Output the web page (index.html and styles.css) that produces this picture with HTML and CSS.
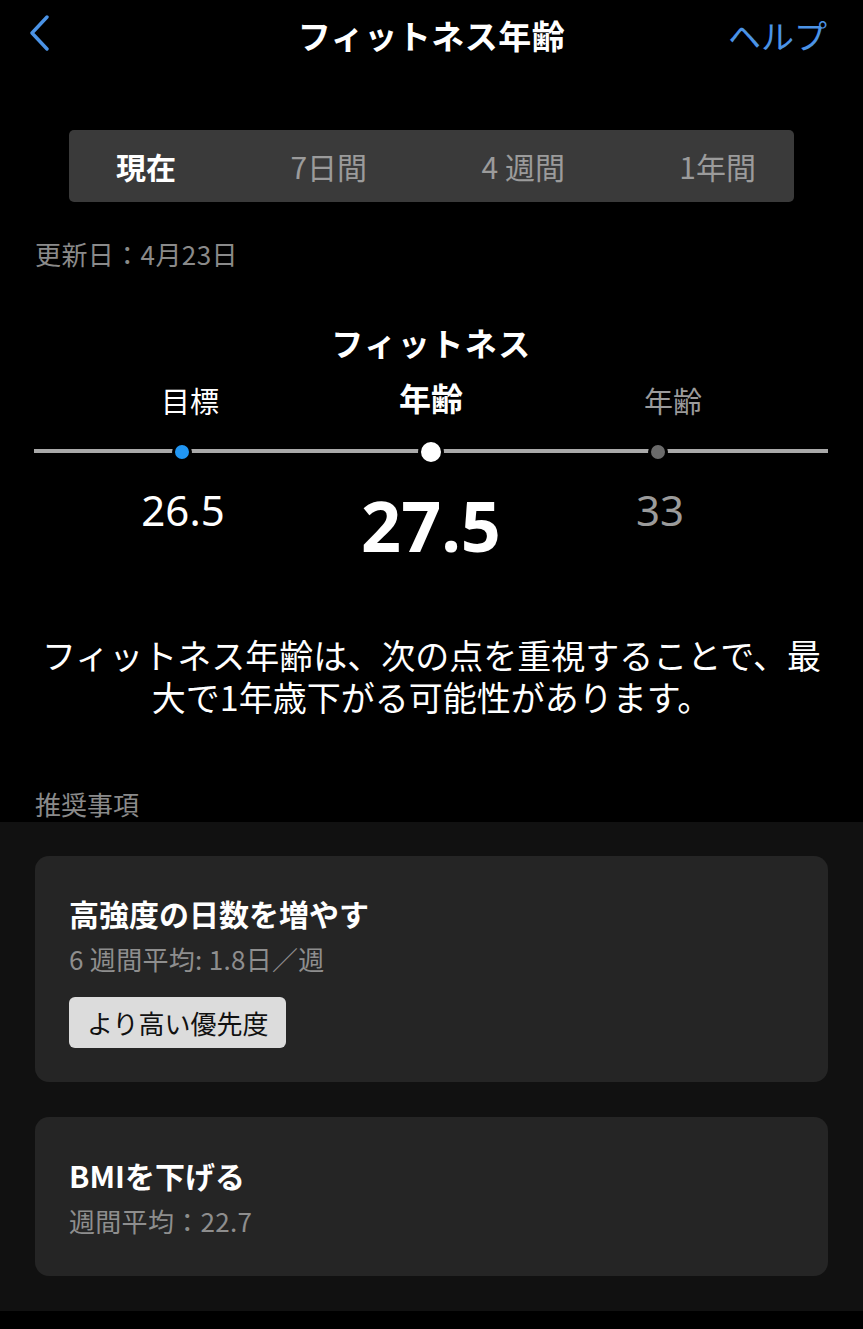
FILE: index.html
```html
<!DOCTYPE html>
<html lang="ja">
<head>
<meta charset="utf-8">
<title>フィットネス年齢</title>
<link rel="stylesheet" href="styles.css">
</head>
<body>
<div class="page">
  <header class="nav">
    <div class="nav-left">
      <svg class="back" width="24" height="36" viewBox="0 0 24 36"><polyline points="19,2 4,18 19,34" fill="none" stroke="#4b93e6" stroke-width="3.4" stroke-linecap="round" stroke-linejoin="round"/></svg>
    </div>
    <h1 class="nav-title">フィットネス年齢</h1>
    <div class="nav-right"><span class="help">ヘルプ</span></div>
  </header>

  <nav class="segments">
    <span class="seg seg-active">現在</span>
    <span class="seg">7日間</span>
    <span class="seg">4 週間</span>
    <span class="seg">1年間</span>
  </nav>

  <p class="updated">更新日：4月23日</p>

  <section class="gauge">
    <div class="gauge-title">フィットネス</div>
    <div class="cols labels">
      <span class="lbl">目標</span>
      <span class="lbl lbl-main">年齢</span>
      <span class="lbl lbl-dim">年齢</span>
    </div>
    <div class="cols track">
      <span class="dot-cell"><span class="dot dot-blue"></span></span>
      <span class="dot-cell"><span class="dot dot-white"></span></span>
      <span class="dot-cell dot-cell-r"><span class="dot dot-gray"></span></span>
    </div>
    <div class="cols values">
      <span class="val val-l">26.5</span>
      <span class="val val-main">27.5</span>
      <span class="val val-dim val-r">33</span>
    </div>
  </section>

  <p class="message">フィットネス年齢は、次の点を重視することで、最大で1年歳下がる可能性があります。</p>

  <h2 class="section-label">推奨事項</h2>

  <section class="recs">
    <div class="card">
      <div class="card-title">高強度の日数を増やす</div>
      <div class="card-sub">6 週間平均: 1.8日／週</div>
      <span class="badge">より高い優先度</span>
    </div>
    <div class="card card-2">
      <div class="card-title">BMIを下げる</div>
      <div class="card-sub">週間平均：22.7</div>
    </div>
  </section>
</div>
</body>
</html>
```

FILE: styles.css
```css
* { box-sizing: border-box; }
html, body {
  margin: 0;
  padding: 0;
  background: #000;
}
body {
  font-family: "Noto Sans CJK JP", "Noto Sans", sans-serif;
  color: #fff;
  width: 863px;
  min-height: 1329px;
}
.page { width: 863px; }

.nav {
  height: 70px;
  display: grid;
  grid-template-columns: 1fr auto 1fr;
  align-items: center;
  padding: 0 36px 0 28px;
}
.nav-left { display: flex; align-items: center; }
.back { display: block; margin-top: -4px; }
.nav-title {
  margin: 0;
  font-size: 33px;
  font-weight: 700;
  line-height: 40px;
  letter-spacing: 0.5px;
  margin-left: 8px;
}
.nav-right { display: flex; justify-content: flex-end; }
.help {
  color: #4b93e6;
  font-size: 33px;
  line-height: 40px;
}

.segments {
  margin: 60px 69px 0;
  height: 72px;
  background: #3a3a3a;
  border-radius: 5px;
  display: flex;
  align-items: center;
  justify-content: space-between;
  padding: 0 38px 0 47px;
}
.seg {
  font-size: 30px;
  line-height: 40px;
  color: #9b9b9b;
}
.seg-active {
  color: #fff;
  font-weight: 700;
}

.updated {
  margin: 34px 0 0 35px;
  font-size: 26px;
  line-height: 36px;
  color: #8a8a8a;
  letter-spacing: 0.4px;
}

.gauge { margin-top: 50px; }
.gauge-title {
  text-align: center;
  font-size: 32px;
  font-weight: 700;
  line-height: 40px;
  letter-spacing: 1.5px;
}
.cols {
  display: grid;
  grid-template-columns: 250px 240px 222px;
  padding-left: 61px;
}
.labels { margin-top: 18px; }
.lbl {
  text-align: center;
  font-size: 29px;
  line-height: 40px;
  color: #fff;
}
.lbl:first-child { margin-left: 8px; }
.lbl-main {
  font-size: 32px;
  font-weight: 700;
  margin-top: -3px;
}
.lbl-dim { color: #9b9b9b; margin-left: 22px; }

.track {
  margin-top: 19px;
  height: 24px;
  align-items: center;
  background-image: linear-gradient(#a9a9a9, #a9a9a9);
  background-size: 794px 4px;
  background-position: 34px center;
  background-repeat: no-repeat;
}
.dot-cell {
  display: flex;
  justify-content: center;
  margin-left: -8px;
}
.dot-cell:nth-child(2) { margin-left: 0; }
.dot-cell-r { margin-left: -8px; }
.dot {
  display: block;
  border-radius: 50%;
  border: 3px solid #000;
}
.dot-blue { width: 20px; height: 20px; background: #2196f3; }
.dot-white { width: 26px; height: 26px; background: #fff; }
.dot-gray { width: 20px; height: 20px; background: #6a6a6a; }

.values {
  margin-top: 22px;
  align-items: start;
}
.val {
  text-align: center;
  font-size: 42px;
  line-height: 50px;
  color: #fff;
  font-family: "Noto Sans", "Noto Sans CJK JP", sans-serif;
}
.val-l { margin-left: -6px; }
.val-r { margin-left: -4px; }
.val-main {
  font-size: 70px;
  font-weight: 700;
  line-height: 80px;
}
.val-dim { color: #9b9b9b; }

.message {
  margin: 69px 30px 0;
  text-align: center;
  font-size: 34px;
  line-height: 42px;
  color: #fff;
}

.section-label {
  margin: 68px 0 0 35px;
  font-size: 26px;
  font-weight: 400;
  line-height: 36px;
  color: #8a8a8a;
}

.recs {
  background: #111;
  padding: 34px 35px 35px;
  display: flex;
  flex-direction: column;
  gap: 35px;
}
.card {
  background: #252525;
  border-radius: 14px;
  padding: 37px 34px 34px;
  display: flex;
  flex-direction: column;
  align-items: flex-start;
}
.card-2 { padding: 38px 34px 37px; }
.card-title {
  font-size: 30px;
  font-weight: 700;
  line-height: 40px;
  color: #fff;
}
.card-sub {
  margin-top: 8px;
  font-size: 26px;
  line-height: 36px;
  color: #8e8e8e;
  letter-spacing: 0.3px;
}
.badge {
  margin-top: 20px;
  height: 51px;
  padding: 0 18px;
  display: flex;
  align-items: center;
  background: #dcdcdc;
  color: #111;
  border-radius: 6px;
  font-size: 26px;
}
```
